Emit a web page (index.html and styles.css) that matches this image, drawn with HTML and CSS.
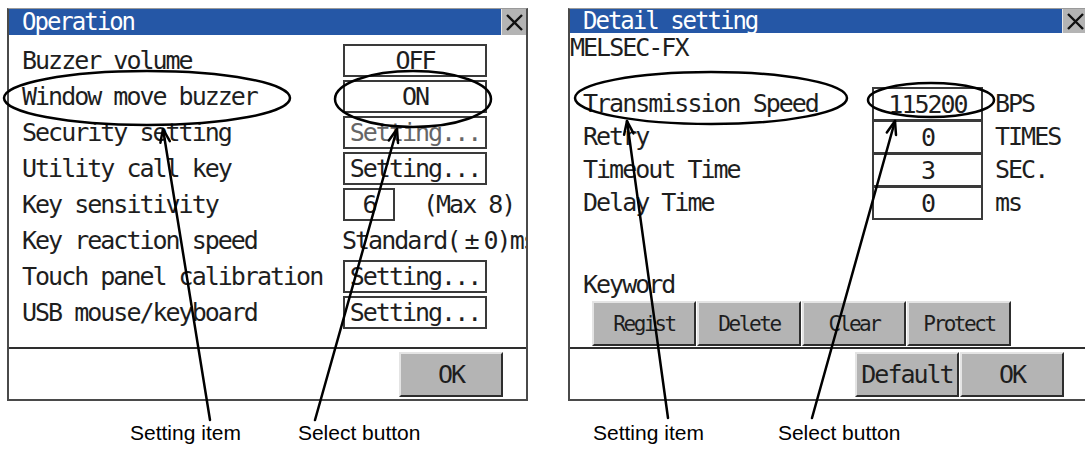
FILE: index.html
```html
<!DOCTYPE html>
<html lang="en">
  <head>
    <meta charset="UTF-8" />
    <meta name="viewport" content="width=device-width, initial-scale=1.0" />
    <title>Operation / Detail setting</title>

    <link rel="stylesheet" href="styles.css">
  </head>

  <body>
    <div class="page">
      <!-- Operation window -->
      <div class="figure">
        <div class="panel">
          <div class="titlebar">
            <span class="title">Operation</span>
            <span class="close">
              <svg width="17" height="17" viewBox="0 0 17 17"><path d="M1 1 L16 16 M16 1 L1 16" stroke="#111" stroke-width="2.4" /></svg>
            </span>
          </div>

          <div class="panel-body op-body">
            <div class="row">
              <span class="label">Buzzer volume</span>
              <span class="select wide">OFF</span>
            </div>
            <div class="row">
              <span class="label">Window move buzzer</span>
              <span class="select wide">ON</span>
            </div>
            <div class="row">
              <span class="label">Security setting</span>
              <span class="select wide dim">Setting...</span>
            </div>
            <div class="row">
              <span class="label">Utility call key</span>
              <span class="select wide">Setting...</span>
            </div>
            <div class="row">
              <span class="label">Key sensitivity</span>
              <span class="value-group">
                <span class="select narrow">6</span>
                <span class="hint">(Max 8)</span>
              </span>
            </div>
            <div class="row">
              <span class="label">Key reaction speed</span>
              <span class="plain">Standard(<span class="wide-char">±</span>0)ms</span>
            </div>
            <div class="row">
              <span class="label">Touch panel calibration</span>
              <span class="select wide">Setting...</span>
            </div>
            <div class="row">
              <span class="label">USB mouse/keyboard</span>
              <span class="select wide">Setting...</span>
            </div>
          </div>

          <div class="footer">
            <span class="btn">OK</span>
          </div>
        </div>

        <div class="captions left-captions">
          <span>Setting item</span>
          <span>Select button</span>
        </div>
      </div>

      <!-- Detail setting window -->
      <div class="figure">
        <div class="panel">
          <div class="titlebar short">
            <span class="title">Detail setting</span>
            <span class="close">
              <svg width="17" height="17" viewBox="0 0 17 17"><path d="M1 1 L16 16 M16 1 L1 16" stroke="#111" stroke-width="2.4" /></svg>
            </span>
          </div>

          <div class="panel-body detail-body">
            <div class="model">MELSEC-FX</div>

            <div class="param-list">
              <div class="param">
                <span class="label">Transmission Speed</span>
                <span class="num">115200</span>
                <span class="unit">BPS</span>
              </div>
              <div class="param">
                <span class="label">Retry</span>
                <span class="num">0</span>
                <span class="unit">TIMES</span>
              </div>
              <div class="param">
                <span class="label">Timeout Time</span>
                <span class="num">3</span>
                <span class="unit">SEC.</span>
              </div>
              <div class="param">
                <span class="label">Delay Time</span>
                <span class="num">0</span>
                <span class="unit">ms</span>
              </div>
            </div>

            <div class="keyword">Keyword</div>
            <div class="key-buttons">
              <span class="btn small">Regist</span>
              <span class="btn small">Delete</span>
              <span class="btn small">Clear</span>
              <span class="btn small">Protect</span>
            </div>
          </div>

          <div class="footer">
            <span class="btn">Default</span>
            <span class="btn">OK</span>
          </div>
        </div>

        <div class="captions right-captions">
          <span>Setting item</span>
          <span>Select button</span>
        </div>
      </div>
    </div>

    <!-- callout marks drawn over the screens -->
    <svg class="marks" width="1085" height="451" viewBox="0 0 1085 451">
      <g fill="none" stroke="#000" stroke-width="2.5" stroke-linecap="round" stroke-linejoin="round">
        <ellipse cx="147" cy="98" rx="143" ry="27" />
        <ellipse cx="413" cy="99" rx="78" ry="28" />
        <ellipse cx="711" cy="98" rx="136" ry="26" />
        <ellipse cx="931" cy="100" rx="63" ry="17" />

        <line x1="210" y1="420" x2="163" y2="129" />
        <polyline points="160.4,142.7 163,129 169.8,141.2" />

        <line x1="315" y1="420" x2="397" y2="129" />
        <polyline points="388.8,140.4 397,129 398,143" />

        <line x1="668" y1="418" x2="627" y2="121" />
        <polyline points="624.1,134.7 627,121 633.5,133.4" />

        <line x1="812" y1="418" x2="895" y2="121" />
        <polyline points="886.8,132.4 895,121 896,135" />
      </g>
    </svg>
  </body>
</html>
```

FILE: styles.css
```css
body {
  margin: 0;
  background: #fff;
  position: relative;
  overflow: hidden;
  width: 1085px;
  height: 451px;
}

.page {
  display: flex;
  gap: 40px;
  padding: 8px 0 0 7px;
}

.figure {
  flex-shrink: 0;
}

.panel {
  width: 521px;
  box-sizing: border-box;
  border: 2px solid #4a4a4a;
  border-top: 1px solid #9a9a9a;
  font-family: "DejaVu Sans Mono", monospace;
  font-size: 25px;
  letter-spacing: -2px;
  color: #1e1e1e;
  display: flex;
  flex-direction: column;
  overflow: hidden;
}

.titlebar {
  height: 26px;
  display: flex;
  align-items: center;
  justify-content: space-between;
  background-color: #2557a6;
}

.titlebar.short {
  height: 24px;
}

.title {
  color: #fff;
  padding-left: 13px;
  font-size: 24px;
  line-height: 1;
}

.close {
  align-self: stretch;
  width: 24px;
  background-color: #b4b4b4;
  border-left: 1px solid #e6e6e6;
  display: flex;
  align-items: center;
  justify-content: center;
}

.panel-body {
  box-sizing: border-box;
  height: 312px;
}

/* Operation window */
.op-body {
  padding: 9px 0 0 13px;
}

.row {
  display: grid;
  grid-template-columns: 321px 1fr;
  align-items: center;
  height: 33px;
  margin-bottom: 3px;
  white-space: nowrap;
}

.select {
  box-sizing: border-box;
  height: 33px;
  border: 2px solid #3a3a3a;
  background: #fff;
  display: flex;
  align-items: center;
  justify-content: center;
}

.select.wide {
  width: 144px;
}

.select.narrow {
  width: 52px;
}

.select.dim {
  color: #666;
}

.value-group {
  display: flex;
  align-items: center;
}

.hint {
  margin-left: 28px;
}

.plain {
  margin-left: -1px;
}

/* the plus-minus sign is a full-width glyph on the panel */
.wide-char {
  padding: 0 6px 0 5px;
}

/* Detail setting window */
.detail-body {
  height: 314px;
}

.model {
  height: 26px;
  line-height: 26px;
  margin-top: 2px;
}

.param-list {
  margin-top: 26px;
}

.param {
  display: flex;
  align-items: center;
  height: 33px;
  padding-left: 13px;
}

.param .label {
  width: 289px;
}

.num {
  box-sizing: border-box;
  width: 111px;
  height: 34px;
  margin-bottom: -1px;
  border: 2px solid #3a3a3a;
  display: flex;
  align-items: center;
  justify-content: center;
}

.unit {
  margin-left: 12px;
}

.keyword {
  height: 26px;
  line-height: 26px;
  margin-top: 53px;
  padding-left: 13px;
}

.key-buttons {
  display: flex;
  gap: 1px;
  margin-top: 3px;
  padding-left: 22px;
}

/* grey push buttons */
.btn {
  box-sizing: border-box;
  width: 104px;
  height: 45px;
  background-color: #b4b4b4;
  border: 2px solid #2e2e2e;
  border-top-color: #e4e4e4;
  border-left-color: #e4e4e4;
  display: flex;
  align-items: center;
  justify-content: center;
}

.btn.small {
  font-size: 21px;
  letter-spacing: -2.4px;
}

.footer {
  border-top: 2px solid #2e2e2e;
  height: 52px;
  box-sizing: border-box;
  padding: 3px 23px 0 0;
  display: flex;
  justify-content: flex-end;
  gap: 1px;
}

/* captions under the screens */
.captions {
  display: flex;
  margin-top: 20px;
  font-family: "Liberation Sans", Arial, sans-serif;
  font-size: 21px;
  color: #000;
}

.left-captions {
  padding-left: 123px;
  gap: 57px;
}

.right-captions {
  padding-left: 25px;
  gap: 74px;
}

.marks {
  position: absolute;
  top: 0;
  left: 0;
  pointer-events: none;
}
```
